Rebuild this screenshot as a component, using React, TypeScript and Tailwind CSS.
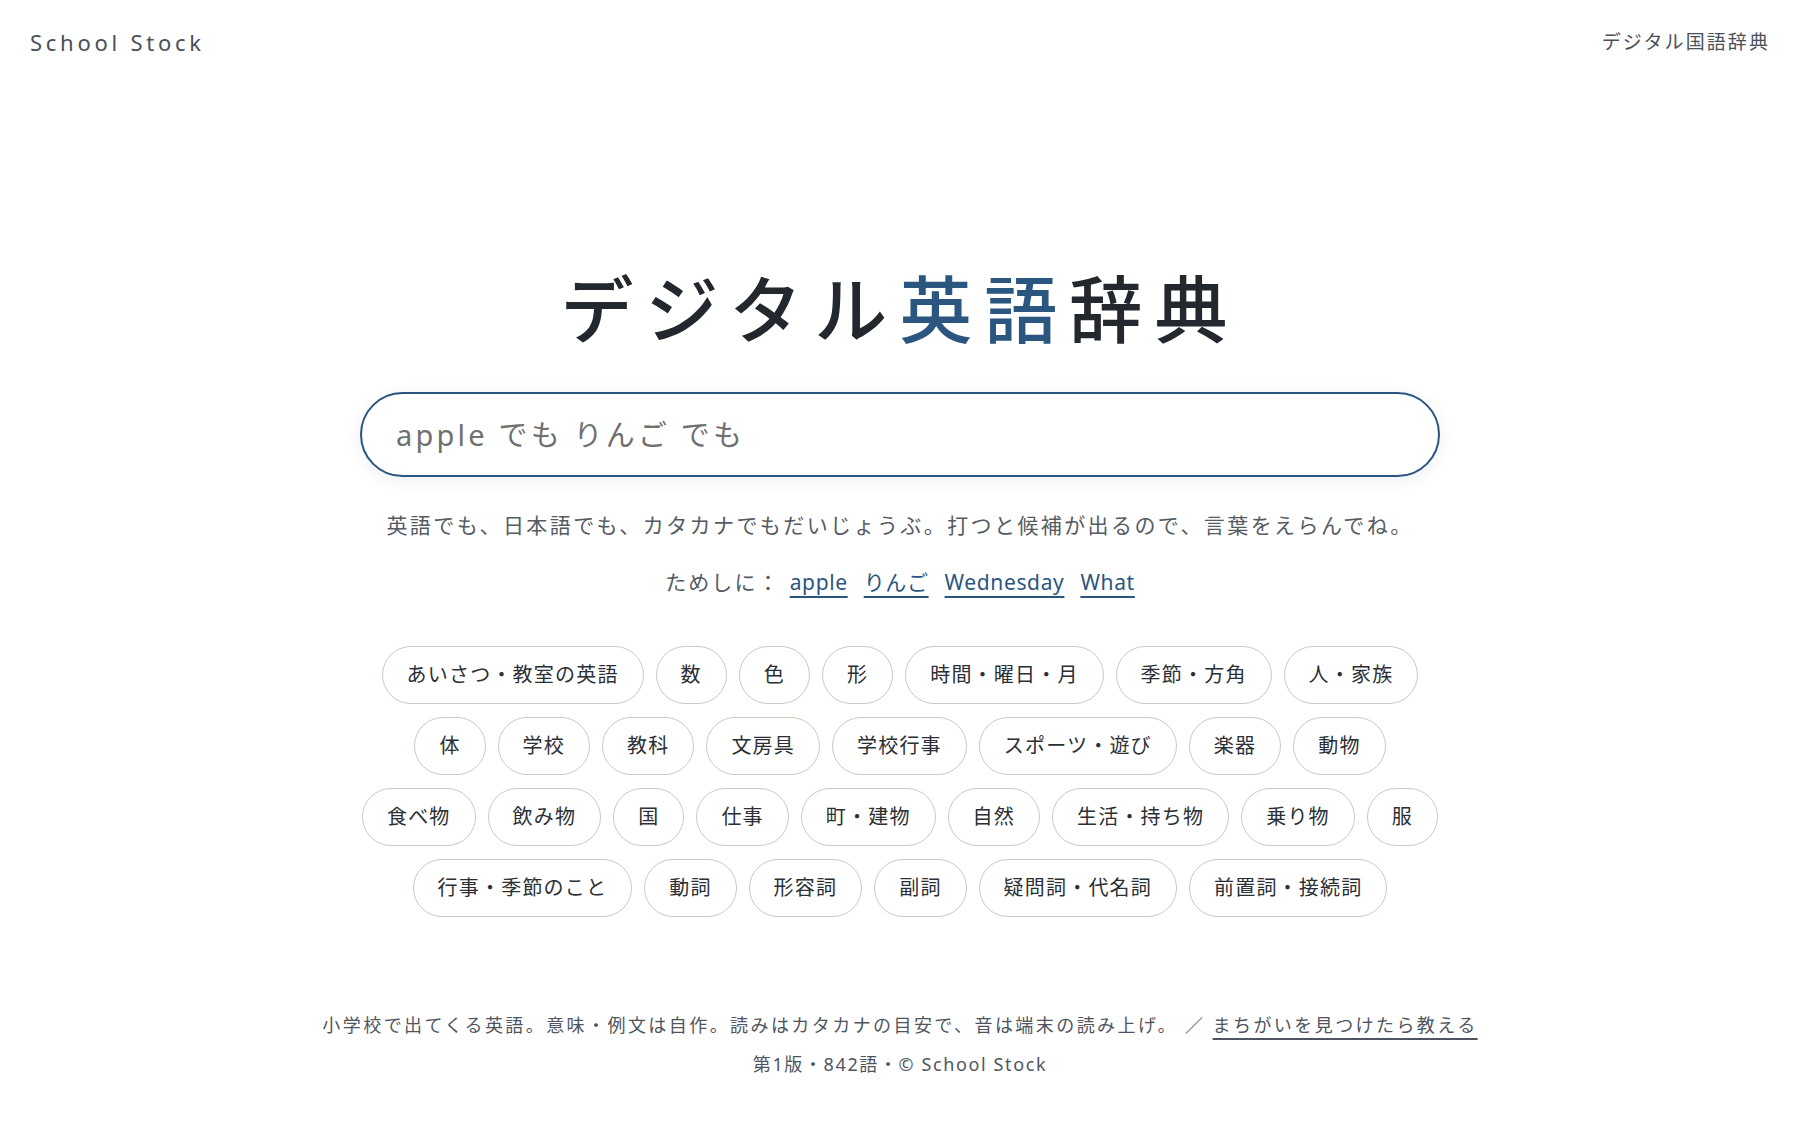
import { useState } from "react";

const categoryRows: string[][] = [
  ["あいさつ・教室の英語", "数", "色", "形", "時間・曜日・月", "季節・方角", "人・家族"],
  ["体", "学校", "教科", "文房具", "学校行事", "スポーツ・遊び", "楽器", "動物"],
  ["食べ物", "飲み物", "国", "仕事", "町・建物", "自然", "生活・持ち物", "乗り物", "服"],
  ["行事・季節のこと", "動詞", "形容詞", "副詞", "疑問詞・代名詞", "前置詞・接続詞"],
];

const samples = ["apple", "りんご", "Wednesday", "What"];

export default function App() {
  const [query, setQuery] = useState("");

  return (
    <div className="flex min-h-screen flex-col bg-white font-['Noto_Sans','Noto_Sans_CJK_JP',sans-serif] text-[#2b2f36]">
      <header className="flex items-center justify-between px-[30px] pt-[26px]">
        <a href="#" className="text-[22px] leading-[32px] tracking-[0.17em] text-[#4a505a]">
          School Stock
        </a>
        <a href="#" className="text-[19px] leading-[32px] tracking-[0.11em] text-[#4a505a]">
          デジタル国語辞典
        </a>
      </header>

      <main className="flex flex-1 flex-col items-center pt-[207px]">
        <h1 className="text-[73px] font-medium leading-[88px] tracking-[0.165em] text-[#23272e]">
          デジタル<span className="text-[#2a5680]">英語</span>辞典
        </h1>

        <div className="mt-[39px] w-[1080px]">
          <input
            value={query}
            onChange={(e) => setQuery(e.target.value)}
            placeholder="apple でも りんご でも"
            className="h-[85px] w-full rounded-full border-2 border-[#2a5580] bg-white px-[34px] text-[29px] tracking-[0.11em] text-[#2b2f36] shadow-[0_4px_16px_rgba(30,60,100,0.08)] outline-none placeholder:text-[#707070]"
          />
        </div>

        <p className="mt-[33px] text-[21px] leading-[30px] tracking-[0.115em] text-[#555b63]">
          英語でも、日本語でも、カタカナでもだいじょうぶ。打つと候補が出るので、言葉をえらんでね。
        </p>

        <div className="mt-[26px] flex items-center text-[21px] leading-[32px]">
          <span className="mr-[9px] tracking-[0.1em] text-[#555b63]">ためしに：</span>
          <div className="flex items-center gap-[16px]">
            {samples.map((s) => (
              <button
                key={s}
                type="button"
                onClick={() => setQuery(s)}
                className="tracking-[0.03em] text-[#2a5580] underline decoration-2 underline-offset-[6px]"
              >
                {s}
              </button>
            ))}
          </div>
        </div>

        <div className="mt-[48px] flex flex-col items-center gap-[13px]">
          {categoryRows.map((row, i) => (
            <div key={i} className="flex gap-[12px]">
              {row.map((c) => (
                <button
                  key={c}
                  type="button"
                  className="h-[58px] rounded-full border border-[#cdc8bf] bg-white px-[24px] text-[20px] tracking-[0.06em] text-[#2b2f36] transition hover:border-[#2a5580]"
                >
                  {c}
                </button>
              ))}
            </div>
          ))}
        </div>
      </main>

      <footer className="flex flex-col items-center gap-[11px] pb-[47px] text-[18px] leading-[28px] tracking-[0.135em] text-[#4f5560]">
        <p>
          小学校で出てくる英語。意味・例文は自作。読みはカタカナの目安で、音は端末の読み上げ。 ／{" "}
          <a href="#" className="underline decoration-2 underline-offset-[6px]">
            まちがいを見つけたら教える
          </a>
        </p>
        <p className="tracking-[0.09em]">第1版・842語・© School Stock</p>
      </footer>
    </div>
  );
}
